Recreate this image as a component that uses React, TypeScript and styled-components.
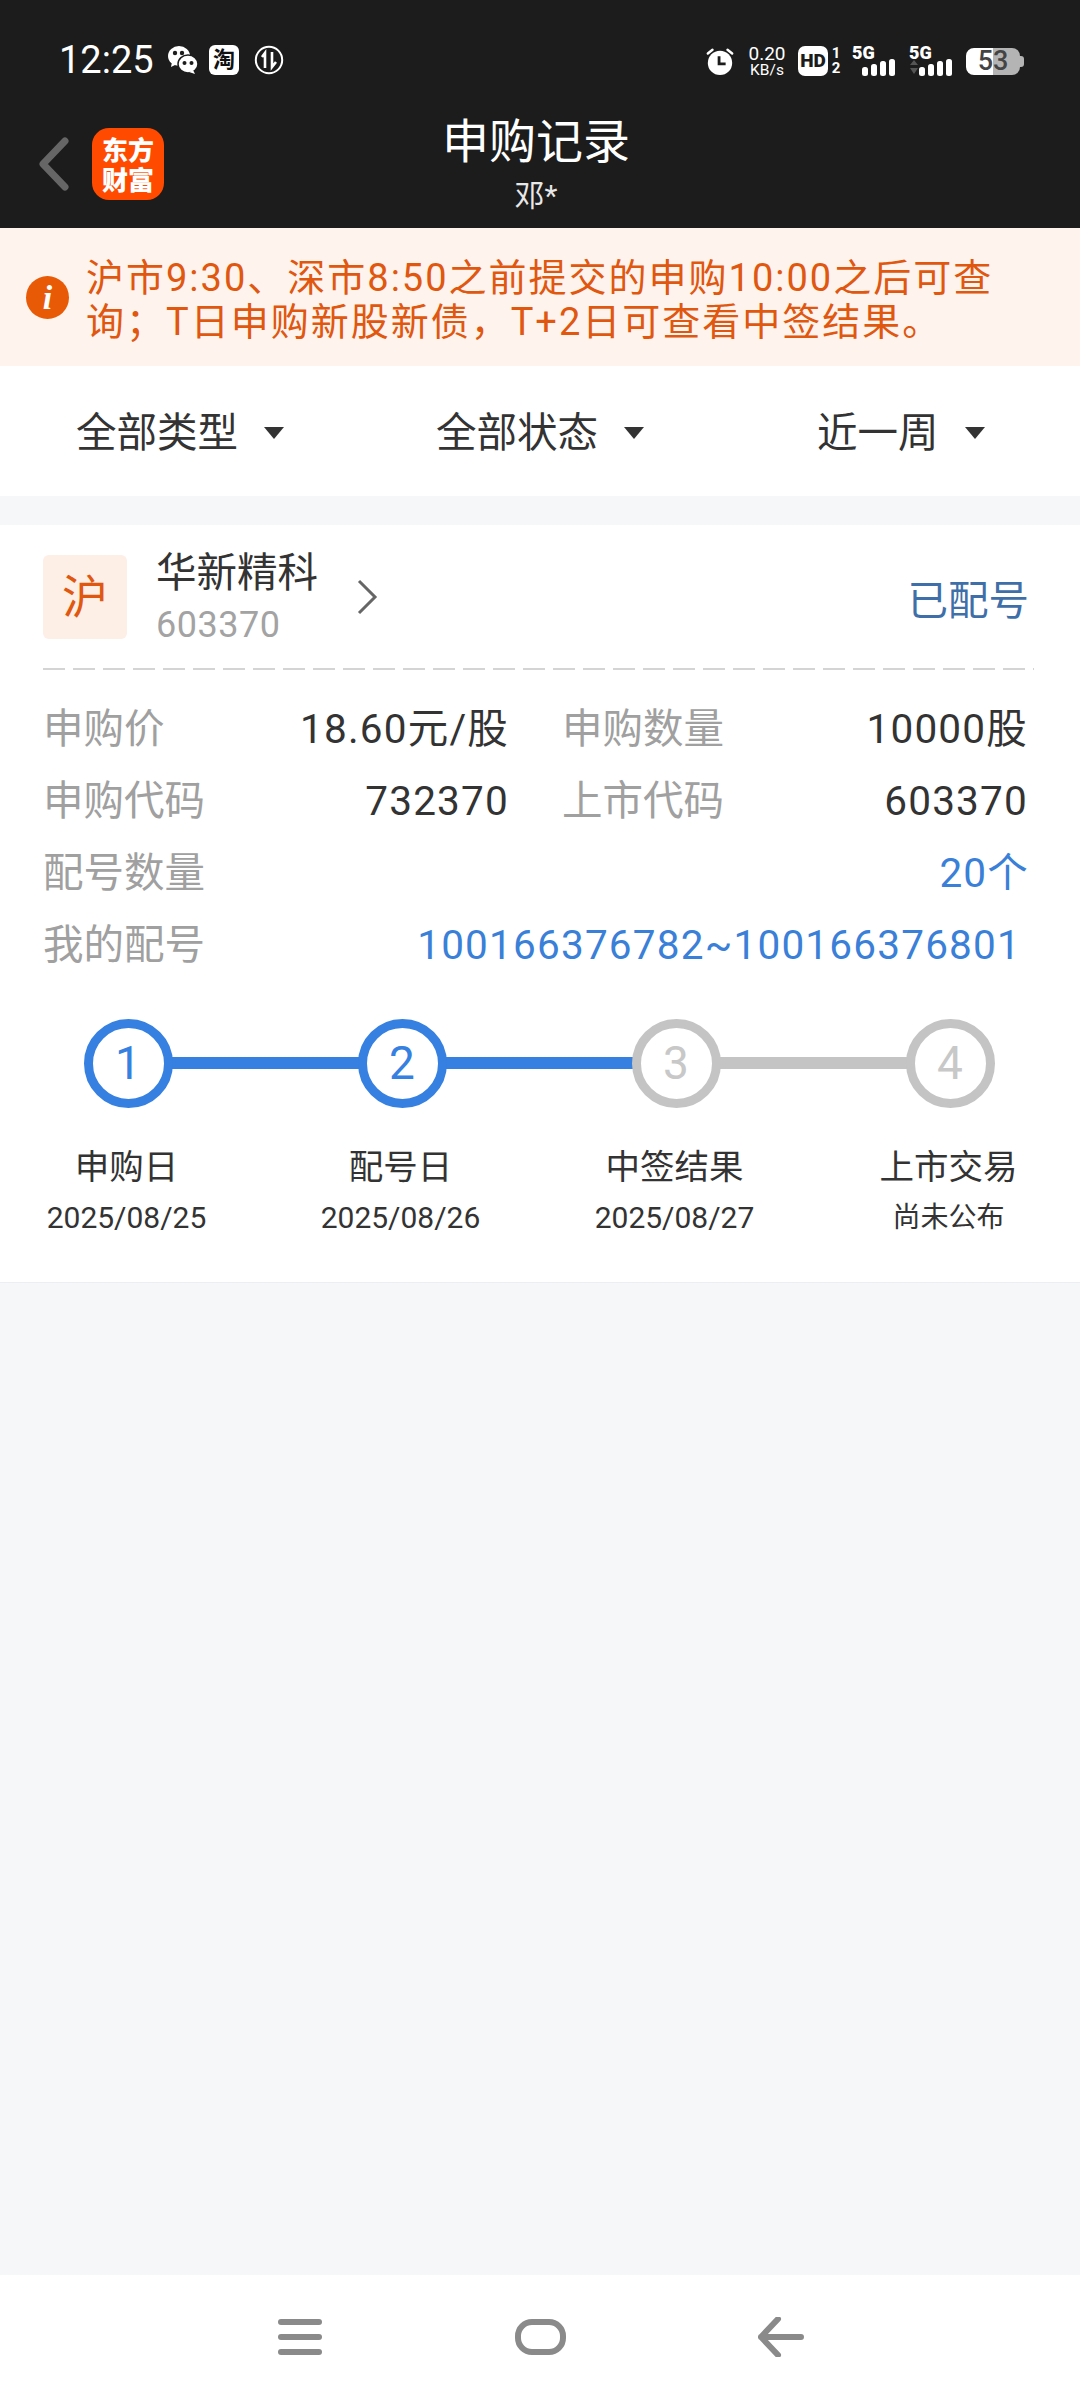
import React from "react";
import styled, { createGlobalStyle } from "styled-components";

const GlobalStyle = createGlobalStyle`
  html, body {
    margin: 0;
    padding: 0;
    background: #f6f7f9;
    font-family: Roboto, "Noto Sans CJK SC", sans-serif;
  }
  * { box-sizing: border-box; }
`;

const Page = styled.div`
  width: 1080px;
  height: 2400px;
  display: flex;
  flex-direction: column;
  overflow: hidden;
`;

const Top = styled.header`
  height: 228px;
  background: #1c1c1c;
  color: #fff;
`;

const StatusBar = styled.div`
  height: 106px;
  padding: 40px 56px 0 59px;
  display: flex;
  justify-content: space-between;
  align-items: flex-start;
`;

const StatusLeft = styled.div`
  display: flex;
  align-items: center;
  height: 40px;
`;

const Clock = styled.span`
  font-size: 38px;
  line-height: 40px;
  width: 109px;
`;

const TaoBadge = styled.span`
  width: 30px;
  height: 30px;
  margin: 0 15px 0 11px;
  border-radius: 6px;
  background: #fff;
  color: #111;
  font-size: 22px;
  font-weight: 700;
  line-height: 30px;
  text-align: center;
`;

const StatusRight = styled.div`
  display: flex;
  align-items: center;
  height: 32px;
  margin-top: 5px;
`;

const Speed = styled.div`
  width: 38px;
  margin: 0 12px 0 13px;
  text-align: center;
  font-size: 19px;
  line-height: 18px;
  small {
    display: block;
    font-size: 15.5px;
    line-height: 15px;
    white-space: nowrap;
  }
`;

const HdBadge = styled.span`
  width: 30px;
  height: 30px;
  border-radius: 7px;
  background: #fff;
  color: #1c1c1c;
  font-size: 19px;
  font-weight: 900;
  line-height: 30px;
  text-align: center;
`;

const SimNumbers = styled.span`
  width: 12px;
  margin: 0 10px 0 2px;
  font-size: 15px;
  font-weight: 700;
  line-height: 15px;
  text-align: center;
`;

const Signal = styled.div`
  position: relative;
  width: 46px;
  height: 30px;
  margin-right: 11px;
  &:last-of-type {
    margin-right: 8px;
  }
  span {
    position: absolute;
    top: -3px;
    left: 0;
    font-size: 18px;
    font-weight: 900;
    line-height: 20px;
  }
  svg {
    position: absolute;
    left: 0;
    bottom: 0;
  }
`;

const Battery = styled.div`
  position: relative;
  width: 54px;
  height: 27px;
  margin-right: 4px;
  border-radius: 8px;
  background: linear-gradient(90deg, #fff 0 50%, #b4b4b4 50% 100%);
  color: #444;
  font-size: 27px;
  font-weight: 500;
  line-height: 27px;
  text-align: center;
  &::after {
    content: "";
    position: absolute;
    right: -4px;
    top: 8px;
    width: 4px;
    height: 11px;
    border-radius: 0 3px 3px 0;
    background: #b4b4b4;
  }
`;

const NavRow = styled.div`
  height: 122px;
  display: grid;
  grid-template-columns: 300px 1fr 300px;
`;

const NavLeft = styled.div`
  display: flex;
  align-items: center;
  padding: 0 0 6px 38px;
  gap: 22px;
`;

const AppLogo = styled.div`
  width: 72px;
  height: 72px;
  padding-top: 6px;
  border-radius: 17px;
  background: #ff4a00;
  color: #fff;
  font-family: "Noto Sans CJK SC", sans-serif;
  font-size: 26px;
  font-weight: 900;
  line-height: 30px;
  text-align: center;
`;

const TitleBlock = styled.div`
  text-align: center;
  padding-right: 8px;
`;

const Title = styled.div`
  font-size: 47px;
  line-height: 56px;
  margin-top: 8px;
`;

const SubTitle = styled.div`
  font-size: 30px;
  line-height: 38px;
  margin-top: 7px;
  color: #e8e8e8;
`;

const Notice = styled.div`
  height: 138px;
  background: #fff3ee;
  display: flex;
  align-items: center;
  padding: 0 20px 0 26px;
  gap: 17px;
  color: #e0570f;
`;

const NoticeIcon = styled.span`
  flex: none;
  width: 43px;
  height: 43px;
  border-radius: 50%;
  background: #e85a06;
  color: #fff;
  font-family: "Liberation Serif", serif;
  font-style: italic;
  font-weight: 700;
  font-size: 34px;
  line-height: 43px;
  text-align: center;
`;

const NoticeText = styled.div`
  width: 930px;
  margin-top: 6px;
  font-size: 38px;
  line-height: 44px;
  letter-spacing: 2px;
`;

const Filters = styled.div`
  height: 130px;
  background: #fff;
  display: grid;
  grid-template-columns: 360px 381px 1fr;
  padding: 4px 0 0 76px;
  align-items: center;
  margin-bottom: 29px;
`;

const Filter = styled.div`
  display: flex;
  align-items: center;
  gap: 26px;
  font-size: 40.5px;
  line-height: 50px;
  color: #333;
  &::after {
    content: "";
    width: 0;
    height: 0;
    border-left: 10px solid transparent;
    border-right: 10px solid transparent;
    border-top: 12px solid #333;
  }
`;

const Card = styled.section`
  height: 758px;
  background: #fff;
  padding: 30px 51px 0 43px;
  border-bottom: 1px solid #eceef1;
`;

const StockHead = styled.div`
  display: flex;
  align-items: center;
  height: 84px;
`;

const MarketTag = styled.div`
  width: 84px;
  height: 84px;
  border-radius: 6px;
  background: #fdeee6;
  color: #e0570f;
  font-size: 46px;
  line-height: 84px;
  text-align: center;
`;

const StockName = styled.div`
  margin-left: 29px;
  width: 200px;
`;

const NameText = styled.div`
  font-size: 40.5px;
  line-height: 50px;
  color: #333;
  margin-top: 0;
`;

const CodeText = styled.div`
  font-size: 36px;
  line-height: 44px;
  letter-spacing: 0.5px;
  color: #a3a3a3;
  margin-top: 5px;
`;

const Status = styled.div`
  margin-left: auto;
  font-size: 40.5px;
  color: #3f6fa8;
`;

const Dashed = styled.div`
  height: 2px;
  margin: 29px -5px 23px 0;
  background: repeating-linear-gradient(90deg, #d4d4d4 0 22px, transparent 22px 30px);
`;

const InfoRow = styled.div`
  height: 72px;
  display: flex;
  align-items: center;
  font-size: 40.5px;
  line-height: 50px;
  color: #333;
  letter-spacing: 1.2px;
`;

const InfoPairs = styled(InfoRow)`
  display: grid;
  grid-template-columns: 466px 466px;
  column-gap: 53px;
`;

const InfoCell = styled.div`
  display: flex;
  justify-content: space-between;
  align-items: baseline;
`;

const Label = styled.span`
  color: #a0a0a0;
  letter-spacing: 0;
`;

const BlueValue = styled.span<{ $inset?: number }>`
  margin-left: auto;
  margin-right: ${(p) => p.$inset ?? 0}px;
  color: #3a7fd8;
`;

const Steps = styled.div`
  display: grid;
  grid-template-columns: repeat(4, 274px);
  margin: 38px 0 0 -52px;
`;

const Step = styled.div`
  display: flex;
  flex-direction: column;
  align-items: center;
  position: relative;
`;

const Connector = styled.span<{ $on: boolean }>`
  position: absolute;
  left: 137px;
  width: 274px;
  top: 38px;
  height: 12px;
  background: ${(p) => (p.$on ? "#3580e0" : "#c4c4c4")};
`;

const Circle = styled.div<{ $on: boolean }>`
  position: relative;
  width: 89px;
  height: 89px;
  border-radius: 50%;
  border: 9px solid ${(p) => (p.$on ? "#3580e0" : "#c4c4c4")};
  background: #fff;
  color: ${(p) => (p.$on ? "#3580e0" : "#c8c8c8")};
  font-size: 46px;
  line-height: 71px;
  text-align: center;
`;

const StepName = styled.div`
  margin: 37px 3px 0 0;
  font-size: 34.5px;
  line-height: 44px;
  color: #333;
  white-space: nowrap;
`;

const StepDate = styled.div`
  margin: 7px 3px 0 0;
  font-size: 30px;
  line-height: 44px;
  color: #333;
  white-space: nowrap;
`;

const StepPending = styled(StepDate)`
  font-size: 28px;
`;

const Spacer = styled.main`
  flex: 1;
  background: #f6f7f9;
`;

const NavBar = styled.nav`
  height: 125px;
  background: #fff;
  display: flex;
  justify-content: center;
  align-items: flex-start;
  padding-top: 44px;
  gap: 192px;
`;

const BackArrow = styled.svg`
  margin-top: -2px;
`;

const steps = [
  { n: 1, name: "申购日", date: "2025/08/25", on: true },
  { n: 2, name: "配号日", date: "2025/08/26", on: true },
  { n: 3, name: "中签结果", date: "2025/08/27", on: false },
  { n: 4, name: "上市交易", date: "尚未公布", on: false },
];

const SignalBars = ({ arrows }: { arrows?: boolean }) => (
  <svg width="46" height="18" viewBox="0 0 46 18">
    {arrows && <path d="M1 7l4-5 4 5zM1 10l4 6 4-6z" fill="#555" />}
    <rect x="10" y="9" width="6" height="9" rx="2.5" fill="#fff" />
    <rect x="19" y="6" width="6" height="12" rx="2.5" fill="#fff" />
    <rect x="28" y="3" width="6" height="15" rx="2.5" fill="#fff" />
    <rect x="37" y="1" width="6" height="17" rx="2.5" fill="#fff" />
  </svg>
);

export default function App() {
  return (
    <Page>
      <GlobalStyle />
      <Top>
        <StatusBar>
          <StatusLeft>
            <Clock>12:25</Clock>
            <svg width="30" height="30" viewBox="0 0 30 30">
              <ellipse cx="11" cy="11" rx="11" ry="10" fill="#fff" />
              <path d="M4 17l-1 5 6-3z" fill="#fff" />
              <ellipse cx="20" cy="19" rx="10" ry="9" fill="#fff" stroke="#1c1c1c" strokeWidth="1.5" />
              <path d="M25 25l2 4-6-2z" fill="#fff" />
              <circle cx="7" cy="8" r="2.2" fill="#1c1c1c" />
              <circle cx="14" cy="8" r="2.2" fill="#1c1c1c" />
              <circle cx="16.5" cy="18" r="2" fill="#1c1c1c" />
              <circle cx="23.5" cy="18" r="2" fill="#1c1c1c" />
            </svg>
            <TaoBadge>淘</TaoBadge>
            <svg width="30" height="30" viewBox="0 0 30 30" fill="none" stroke="#fff">
              <circle cx="15" cy="15" r="13.2" strokeWidth="2" />
              <path d="M11 23V8l-3 4M18 7v15l4-5" strokeWidth="2.6" />
            </svg>
          </StatusLeft>
          <StatusRight>
            <svg width="30" height="30" viewBox="0 0 32 32">
              <circle cx="16" cy="18" r="13" fill="#fff" />
              <path d="M15 11v8h7" fill="none" stroke="#1c1c1c" strokeWidth="3" />
              <path d="M3 8l5-4M29 8l-5-4" stroke="#fff" strokeWidth="2.6" strokeLinecap="round" />
            </svg>
            <Speed>
              0.20
              <small>KB/s</small>
            </Speed>
            <HdBadge>HD</HdBadge>
            <SimNumbers>
              1
              <br />2
            </SimNumbers>
            <Signal>
              <span>5G</span>
              <SignalBars />
            </Signal>
            <Signal>
              <span>5G</span>
              <SignalBars arrows />
            </Signal>
            <Battery>53</Battery>
          </StatusRight>
        </StatusBar>
        <NavRow>
          <NavLeft>
            <svg width="32" height="56" viewBox="0 0 32 56" fill="none">
              <path d="M27 5L5 28l22 23" stroke="#666" strokeWidth="7" strokeLinecap="round" strokeLinejoin="round" />
            </svg>
            <AppLogo>
              东方
              <br />
              财富
            </AppLogo>
          </NavLeft>
          <TitleBlock>
            <Title>申购记录</Title>
            <SubTitle>邓*</SubTitle>
          </TitleBlock>
        </NavRow>
      </Top>

      <Notice>
        <NoticeIcon>i</NoticeIcon>
        <NoticeText>
          沪市9:30、深市8:50之前提交的申购10:00之后可查询；T日申购新股新债，T+2日可查看中签结果。
        </NoticeText>
      </Notice>

      <Filters>
        <Filter>全部类型</Filter>
        <Filter>全部状态</Filter>
        <Filter>近一周</Filter>
      </Filters>

      <Card>
        <StockHead>
          <MarketTag>沪</MarketTag>
          <StockName>
            <NameText>华新精科</NameText>
            <CodeText>603370</CodeText>
          </StockName>
          <svg width="24" height="36" viewBox="0 0 24 36" fill="none">
            <path d="M3 2l16 16L3 34" stroke="#666" strokeWidth="3" />
          </svg>
          <Status>已配号</Status>
        </StockHead>
        <Dashed />
        <InfoPairs>
          <InfoCell>
            <Label>申购价</Label>
            <span>18.60元/股</span>
          </InfoCell>
          <InfoCell>
            <Label>申购数量</Label>
            <span>10000股</span>
          </InfoCell>
        </InfoPairs>
        <InfoPairs>
          <InfoCell>
            <Label>申购代码</Label>
            <span>732370</span>
          </InfoCell>
          <InfoCell>
            <Label>上市代码</Label>
            <span>603370</span>
          </InfoCell>
        </InfoPairs>
        <InfoRow>
          <Label>配号数量</Label>
          <BlueValue>20个</BlueValue>
        </InfoRow>
        <InfoRow>
          <Label>我的配号</Label>
          <BlueValue $inset={8}>100166376782~100166376801</BlueValue>
        </InfoRow>
        <Steps>
          {steps.map((s, i) => (
            <Step key={s.n}>
              {i < steps.length - 1 && <Connector $on={s.on} />}
              <Circle $on={s.on}>{s.n}</Circle>
              <StepName>{s.name}</StepName>
              {s.n === 4 ? <StepPending>{s.date}</StepPending> : <StepDate>{s.date}</StepDate>}
            </Step>
          ))}
        </Steps>
      </Card>

      <Spacer />

      <NavBar>
        <svg width="46" height="36" viewBox="0 0 46 36">
          <rect x="1" y="0" width="44" height="6" rx="3" fill="#8a8a8a" />
          <rect x="1" y="15" width="44" height="6" rx="3" fill="#8a8a8a" />
          <rect x="1" y="30" width="44" height="6" rx="3" fill="#8a8a8a" />
        </svg>
        <svg width="51" height="36" viewBox="0 0 51 36">
          <rect x="3" y="3" width="45" height="30" rx="14" fill="none" stroke="#8a8a8a" strokeWidth="6" />
        </svg>
        <BackArrow width="46" height="40" viewBox="0 0 46 40" fill="none">
          <path d="M3 20h40M20 2L3 20l17 18" stroke="#8a8a8a" strokeWidth="6" strokeLinecap="round" strokeLinejoin="round" />
        </BackArrow>
      </NavBar>
    </Page>
  );
}
